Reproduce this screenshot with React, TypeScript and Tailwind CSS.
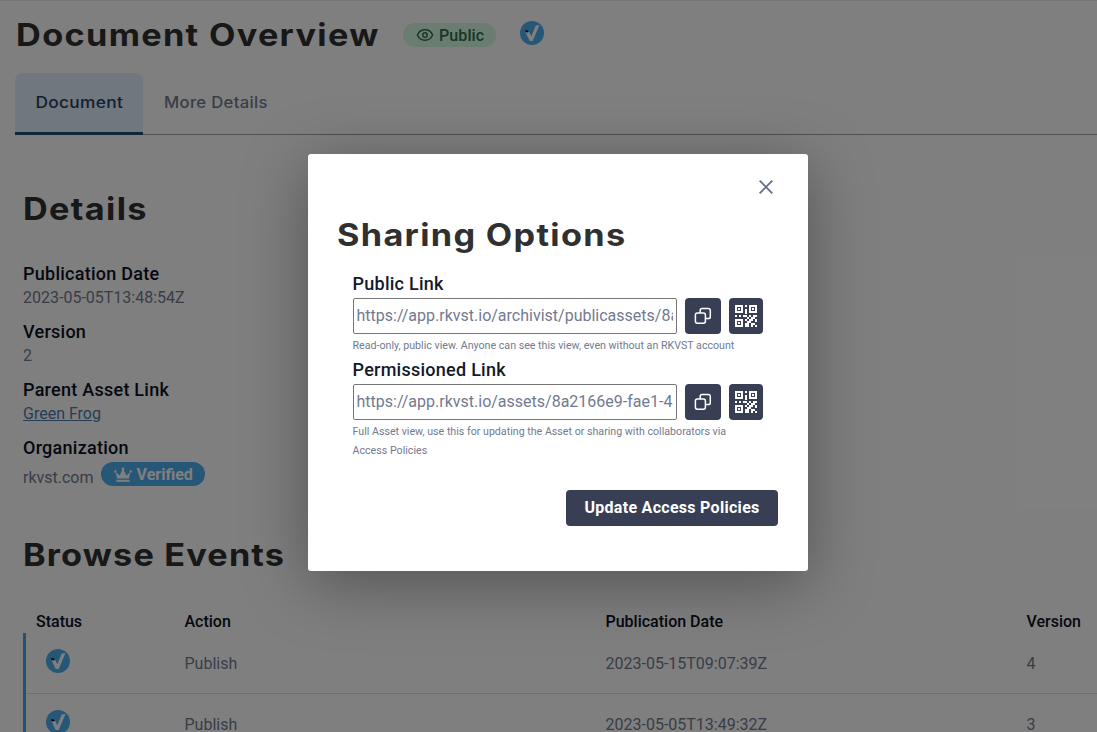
import React from "react";
import { Eye } from "lucide-react";

const heading =
  "font-['Inter'] font-bold text-[#303030] whitespace-nowrap text-[31px] leading-[42px] origin-left scale-x-[1.105]";

function CheckBadge() {
  return (
    <svg width="24" height="24" viewBox="0 0 24 24" className="block shrink-0">
      <circle cx="12" cy="12" r="12" fill="#4eaeec" />
      <path d="M5.600 11.300 9 10.600 11.300 15.200 15.800 4.400 19.500 4 12.700 19.900H9.700Z" fill="#fff" />
      <path d="M5.200 9.300 8 9.400 8.600 11.100 7 11.500 5.400 10.600Z" fill="#000" />
    </svg>
  );
}

function Crown() {
  return (
    <svg width="18" height="16" viewBox="0 0 18 16" className="block shrink-0" fill="#fff">
      <path d="M1.600 5 5.600 8.400 8.500 2.600h1l2.900 5.800 4-3.400L14.900 11.400H3.100Z" />
      <circle cx="9" cy="2" r="1.400" />
      <circle cx="1.300" cy="4.400" r="1.200" />
      <circle cx="16.700" cy="4.400" r="1.200" />
      <path d="M2.400 12.800h13.200v2H2.400z" />
    </svg>
  );
}

function CopyIcon() {
  return (
    <svg width="18" height="18" viewBox="0 0 18 18" fill="none" stroke="#fff" strokeWidth="1.5">
      <rect x="1.400" y="6" width="10" height="10.200" rx="1.900" />
      <path d="M6.200 6V3.300a1.900 1.900 0 0 1 1.900-1.900h6.300a1.900 1.900 0 0 1 1.900 1.900v6.400a1.900 1.900 0 0 1-1.900 1.900h-3" />
    </svg>
  );
}

function QrIcon() {
  return (
    <svg width="22" height="22" viewBox="0 0 22 22" fill="#fff">
      <path fillRule="evenodd" d="M0 0h8v8H0zM2 2v4h4V2zM14 0h8v8h-8zM16 2v4h4V2zM0 14h8v8H0zM2 16v4h4v-4z" />
      <path d="M3 3h2v2H3zM17 3h2v2h-2zM3 17h2v2H3zM10 0h2v2h-2zM10 4h2v5h-2zM0 10h2v2H0zM4 10h2v2H4zM8 10h4v2H8zM14 10h2v2h-2zM18 10h4v2h-4zM12 12h2v2h-2zM16 12h4v2h-4zM10 14h2v2h-2zM14 14h4v2h-4zM20 14h2v3h-2zM12 16h4v2h-4zM10 18h4v4h-4zM16 18h2v4h-2zM18 18h2v2h-2zM20 20h2v2h-2z" />
    </svg>
  );
}

function Detail({ label, children }: { label: string; children: React.ReactNode }) {
  return (
    <div className="h-[58px]">
      <div className="h-6 text-[18px] leading-6 font-medium tracking-[0.26px] text-[#0c111f]">{label}</div>
      <div className="h-6 text-[16px] leading-6 text-[#727a90]">{children}</div>
    </div>
  );
}

function EventRow({ date, version }: { date: string; version: string }) {
  return (
    <div className="flex h-[61px] border-b border-[#dcdee3] pt-4 text-[16px] leading-[30px] text-[#727a90]">
      <div className="w-[158.500px] pl-5">
        <CheckBadge />
      </div>
      <div className="w-[421px]">Publish</div>
      <div className="w-[421px]">{date}</div>
      <div>{version}</div>
    </div>
  );
}

function LinkField({ label, url, hint }: { label: string; url: string; hint: string }) {
  return (
    <div className="mb-px">
      <div className="-ml-[0.5px] h-7 text-[18px] leading-[28px] font-medium tracking-[0.26px] text-[#12192c]">
        {label}
      </div>
      <div className="flex">
        <input
          readOnly
          value={url}
          className="h-9 w-[324px] rounded-[2px] border border-[#767676] bg-white pr-[3px] pb-[2px] pl-[2.5px] text-[16px] text-[#727a90] outline-none"
        />
        <button className="ml-2 flex h-9 w-9 items-center justify-center rounded-[4px] bg-[#383f55]">
          <CopyIcon />
        </button>
        <button className="ml-2 flex h-9 w-[34px] items-center justify-center rounded-[4px] bg-[#383f55]">
          <QrIcon />
        </button>
      </div>
      <div className="mt-[2px] -ml-[0.5px] w-[390px] text-[10.67px] leading-[19px] text-[#727a90]">{hint}</div>
    </div>
  );
}

export default function App() {
  return (
    <div className="relative h-[732px] w-[1097px] overflow-hidden bg-white font-['Roboto',sans-serif]">
      <div className="flex h-full flex-col border-t border-[#ececec]">
        <header className="flex h-[72px] shrink-0 pl-[15px]">
          <h1 className={`${heading} w-[388px] shrink-0 pt-[13px] pl-px tracking-[1.2px]`}>Document Overview</h1>
          <div className="mt-[22px] flex h-6 w-[93px] items-center rounded-full bg-[#d5fbe0] pt-px pl-[13px] text-[16px] font-medium tracking-[0.1px] text-[#2f6f4b]">
            <Eye size={18} strokeWidth={2} className="mr-[5px] mb-px" />
            Public
          </div>
          <div className="mt-5 ml-6">
            <CheckBadge />
          </div>
        </header>

        <nav className="ml-[15px] flex h-[62px] shrink-0 border-b border-[#a0a0a0] font-['Inter'] text-[15.5px] font-medium tracking-[0.3px]">
          <div className="flex h-[62px] w-32 items-center justify-center rounded-t-[8px] border-b-3 border-[#1f4e70] bg-[#e0effd] pt-px text-[#24405f]">
            <span className="scale-x-[1.115]">Document</span>
          </div>
          <div className="flex items-center pb-px pl-[21px] text-[#727a90]">
            <span className="origin-left scale-x-[1.075]">More Details</span>
          </div>
        </nav>

        <main className="flex flex-1 flex-col pl-[23px]">
          <h2 className={`${heading} mt-[53px] h-[42px] tracking-[1.2px]`}>Details</h2>
          <div className="mt-[32px]">
            <Detail label="Publication Date">2023-05-05T13:48:54Z</Detail>
            <Detail label="Version">2</Detail>
            <Detail label="Parent Asset Link">
              <a className="text-[#4c7bab] underline">Green Frog</a>
            </Detail>
            <Detail label="Organization">
              <div className="flex">
                <span className="pt-[6px]">rkvst.com</span>
                <span className="mt-[2px] ml-[7px] flex h-6 w-[104px] items-center rounded-full bg-[#4eaeec] pt-px pl-[13px] font-bold text-white">
                  <Crown />
                  <span className="ml-[5px]">Verified</span>
                </span>
              </div>
            </Detail>
          </div>
          <h2 className={`${heading} mt-[40px] h-[42px] tracking-[1.05px]`}>Browse Events</h2>
          <div className="mt-[34px] flex h-[23px] text-[16px] leading-6 font-medium text-[#0c111f]">
            <div className="w-[161.500px] pl-[13px]">Status</div>
            <div className="w-[421px]">Action</div>
            <div className="w-[421px]">Publication Date</div>
            <div>Version</div>
          </div>
          <div className="border-l-3 border-[#4ea1e8]">
            <EventRow date="2023-05-15T09:07:39Z" version="4" />
            <EventRow date="2023-05-05T13:49:32Z" version="3" />
          </div>
        </main>
      </div>

      <div className="absolute inset-0 bg-black/50 pt-[154px] pl-[308px]">
        <div
          role="dialog"
          className="flex h-[417px] w-[500px] flex-col rounded-[3px] bg-white pl-[30px] shadow-[0_12px_64px_rgba(0,0,0,0.35)]"
        >
          <svg width="14" height="14" viewBox="0 0 14 14" className="mt-[26px] ml-[421px] shrink-0">
            <path d="M.7.7l12.600 12.600M13.300.7.7 13.300" stroke="#666f88" strokeWidth="1.900" fill="none" />
          </svg>
          <h2 className={`${heading} mt-[20px] -ml-px h-[42px] tracking-[1.2px]`}>Sharing Options</h2>
          <div className="mt-[14px] ml-[15px]">
            <LinkField
              label="Public Link"
              url="https://app.rkvst.io/archivist/publicassets/8a2166e9-fae1-4"
              hint="Read-only, public view. Anyone can see this view, even without an RKVST account"
            />
            <LinkField
              label="Permissioned Link"
              url="https://app.rkvst.io/assets/8a2166e9-fae1-4"
              hint="Full Asset view, use this for updating the Asset or sharing with collaborators via Access Policies"
            />
          </div>
          <button className="mt-[29px] ml-[228px] h-9 w-[212px] rounded-[4px] bg-[#383f55] text-[16px] font-bold tracking-[0.29px] text-white">
            Update Access Policies
          </button>
        </div>
      </div>
    </div>
  );
}
